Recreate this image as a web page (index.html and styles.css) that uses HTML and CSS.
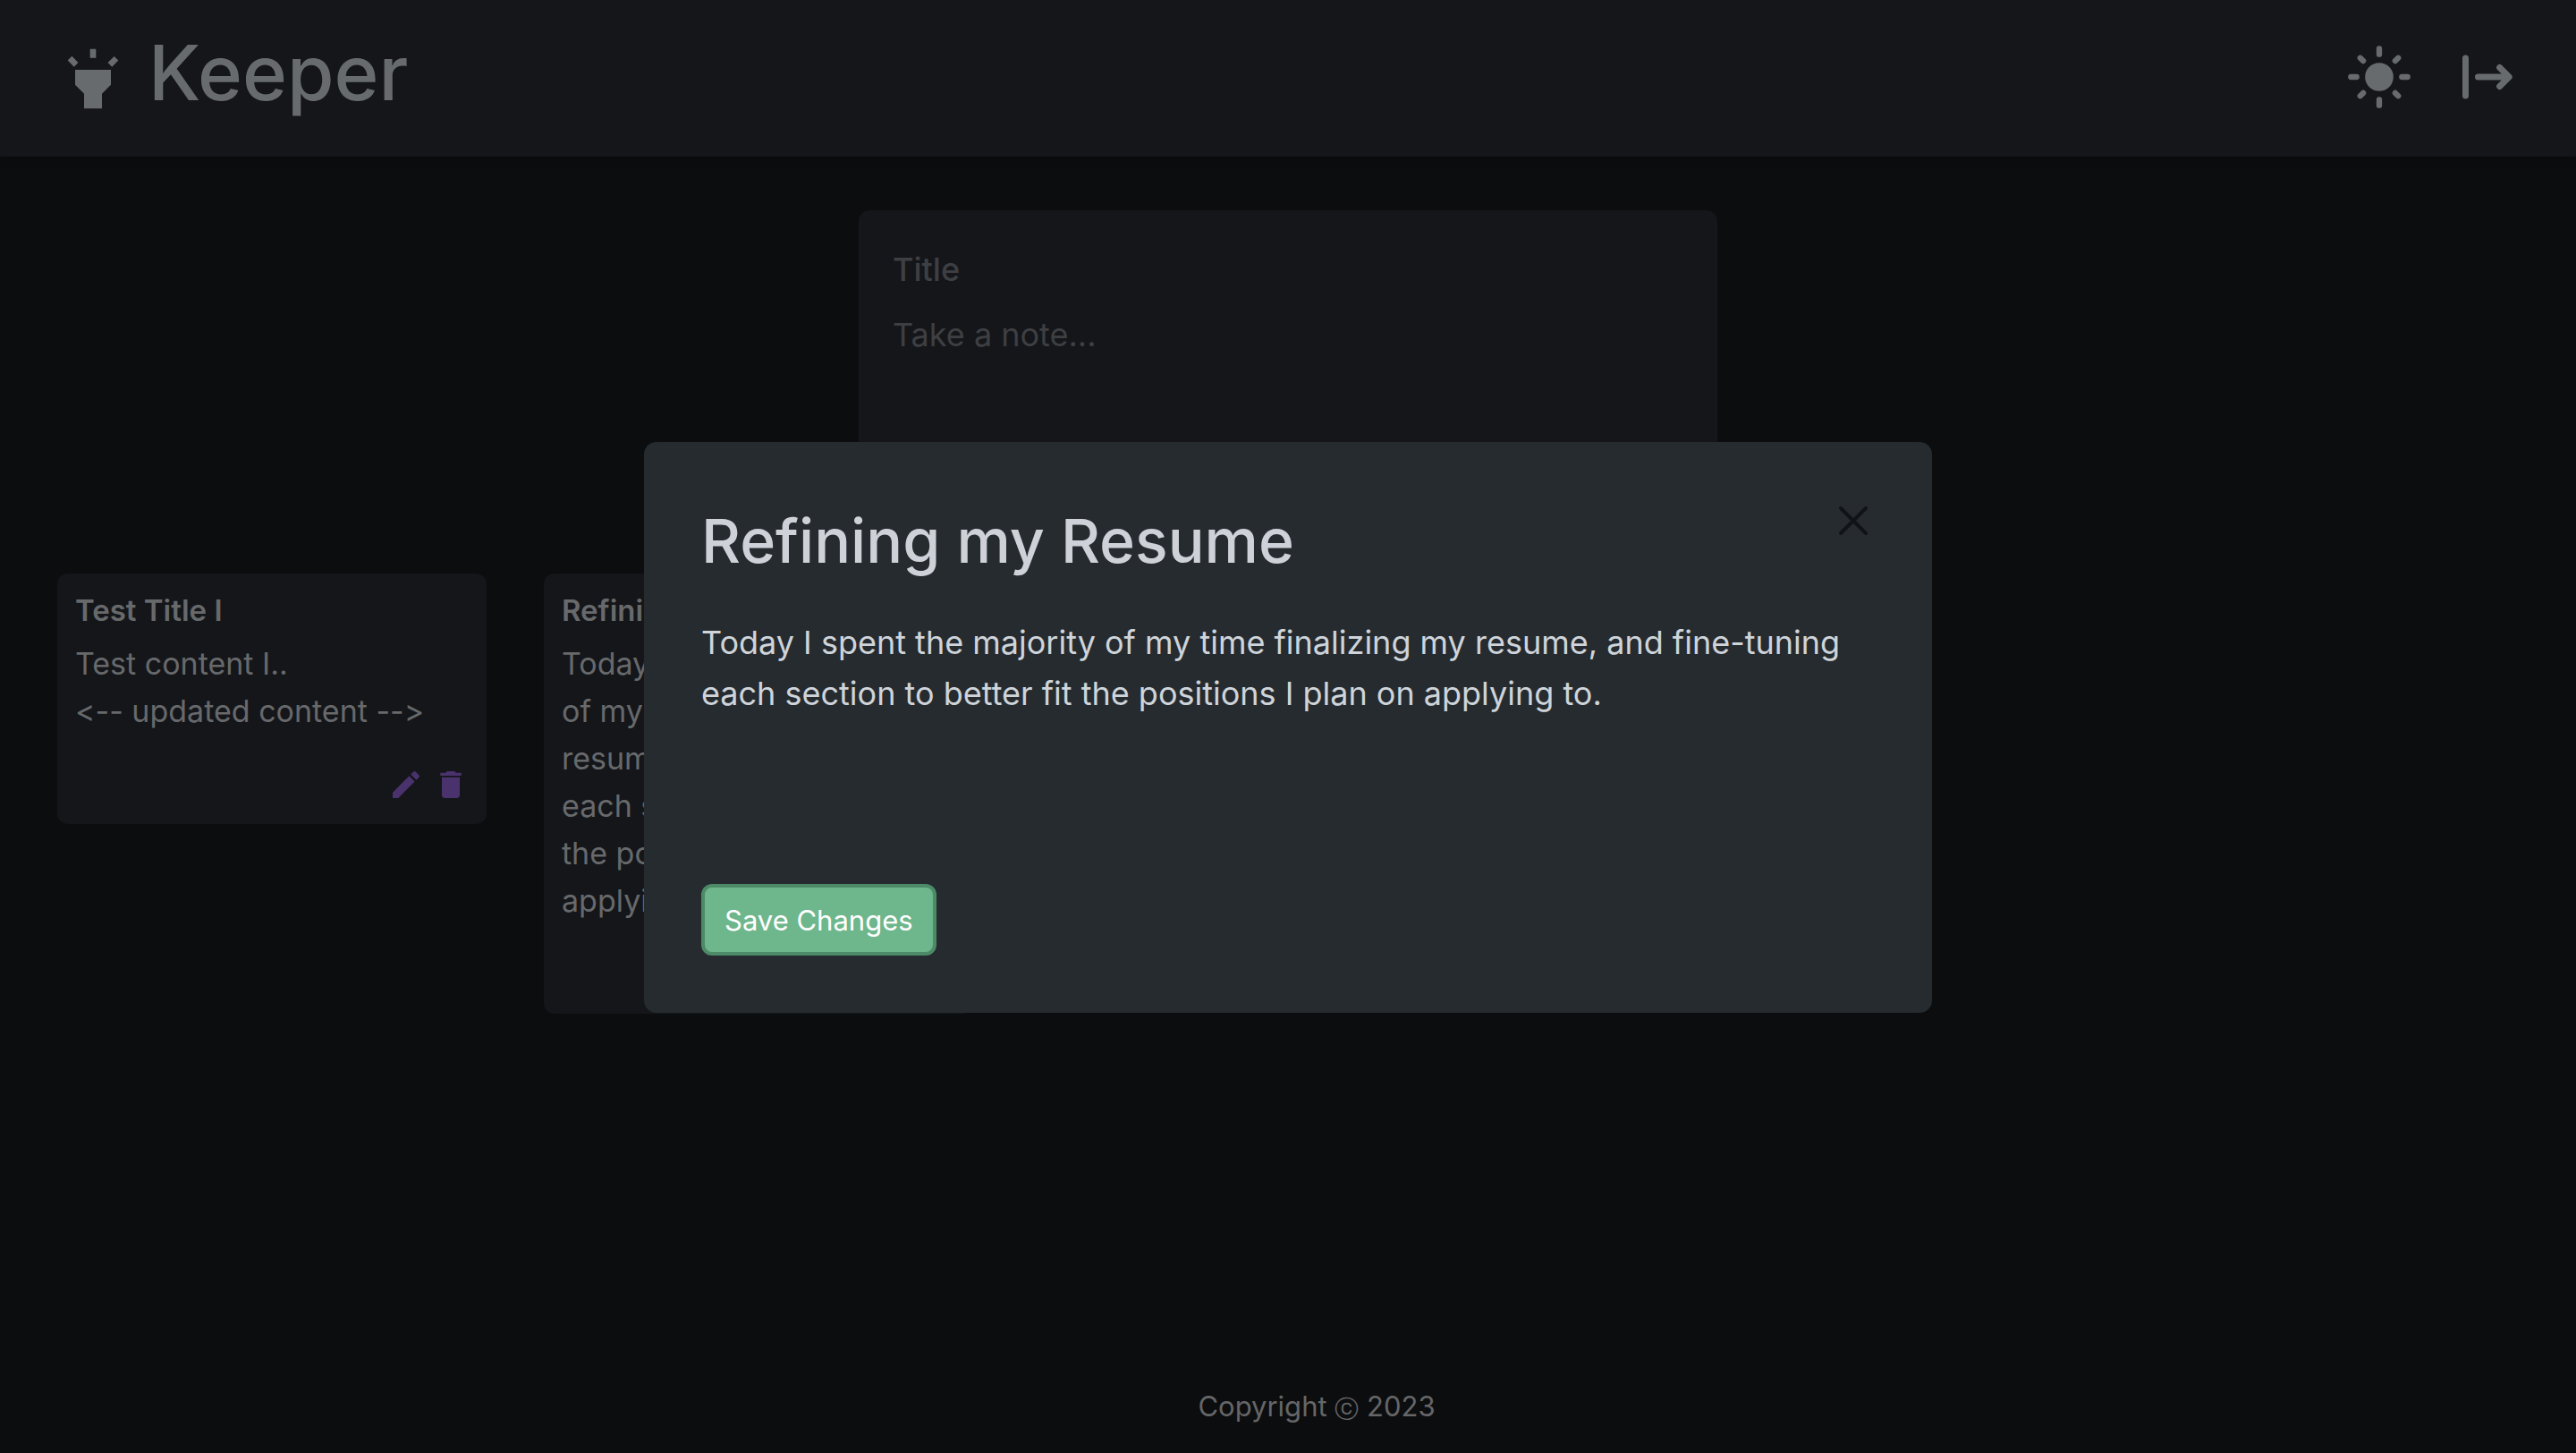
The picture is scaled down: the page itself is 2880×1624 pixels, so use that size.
FILE: index.html
```html
<!DOCTYPE html>
<html lang="en">
<head>
<meta charset="utf-8">
<meta name="viewport" content="width=device-width, initial-scale=1">
<title>Keeper</title>
<link rel="stylesheet" href="styles.css">
</head>
<body>
<div class="page">
  <header class="header">
    <a class="brand" href="#">
      <svg class="brand-icon" viewBox="0 0 24 24" aria-hidden="true"><path d="m6 14 3 3v5h6v-5l3-3V9H6zm5-12h2v3h-2zM3.5 5.875 4.914 4.46l2.12 2.122L5.62 7.997zm13.46.71 2.123-2.12 1.414 1.414L18.375 8z"/></svg>
      <h1 class="brand-name">Keeper</h1>
    </a>
    <nav class="actions">
      <button class="icon-button" type="button" aria-label="Toggle light mode">
        <svg class="icon-sun" viewBox="0 0 24 24"><circle cx="12" cy="12" r="5"/><path class="rays" d="M2 12h2M20 12h2M12 2v2M12 20v2M5.3 5.3l1.05 1.05M17.65 17.65l1.05 1.05M18.7 5.3l-1.05 1.05M6.35 17.65L5.3 18.7"/></svg>
      </button>
      <button class="icon-button" type="button" aria-label="Log out">
        <svg class="icon-logout" viewBox="0 0 24 24"><path class="rays" d="M3 6v12M7 12h9.500M13.900 9l3 3-3 3"/></svg>
      </button>
    </nav>
  </header>

  <main class="main">
    <form class="composer">
      <input class="composer-title" type="text" placeholder="Title" aria-label="Title">
      <textarea class="composer-text" rows="3" placeholder="Take a note..." aria-label="Note"></textarea>
    </form>
    <section class="notes">
      <article class="note">
        <h2 class="note-title">Test Title I</h2>
        <p class="note-text">Test content I..<br>&lt;-- updated content --&gt;</p>
        <div class="note-actions">
          <button class="icon-button" type="button" aria-label="Edit note"><svg class="icon-note" viewBox="0 0 24 24"><path d="M3 17.250V21h3.750L17.810 9.940l-3.750-3.750L3 17.250zM20.710 7.040c.39-.39.39-1.020 0-1.410l-2.340-2.340a1 1 0 0 0-1.410 0l-1.830 1.830 3.750 3.750 1.830-1.830z"/></svg></button>
          <button class="icon-button" type="button" aria-label="Delete note"><svg class="icon-note" viewBox="0 0 24 24"><path d="M6 19c0 1.100.9 2 2 2h8c1.100 0 2-.9 2-2V7H6v12zM19 4h-3.500l-1-1h-5l-1 1H5v2h14V4z"/></svg></button>
        </div>
      </article>
      <article class="note">
        <h2 class="note-title">Refining my Resume</h2>
        <p class="note-text">Today I spent the majority of my time finalizing my resume, and fine-tuning each section to better fit the positions I plan on applying to.</p>
        <div class="note-actions">
          <button class="icon-button" type="button" aria-label="Edit note"><svg class="icon-note" viewBox="0 0 24 24"><path d="M3 17.250V21h3.750L17.810 9.940l-3.750-3.750L3 17.250zM20.710 7.040c.39-.39.39-1.020 0-1.410l-2.340-2.340a1 1 0 0 0-1.410 0l-1.830 1.830 3.750 3.750 1.830-1.830z"/></svg></button>
        </div>
      </article>
    </section>
  </main>

  <footer class="footer">Copyright <span class="mark">ⓒ</span> 2023</footer>
</div>

<div class="overlay">
  <div class="modal" role="dialog" aria-modal="true" aria-labelledby="modal-title">
    <div class="modal-head">
      <h2 class="modal-title" id="modal-title">Refining my Resume</h2>
      <button class="icon-button" type="button" aria-label="Close"><svg class="icon-close" viewBox="0 0 32 32"><path d="M2 2l28 28M30 2L2 30"/></svg></button>
    </div>
    <p class="modal-text">Today I spent the majority of my time finalizing my resume, and fine-tuning each section to better fit the positions I plan on applying to.</p>
    <button class="save" type="button">Save Changes</button>
  </div>
</div>
</body>
</html>
```
FILE: styles.css
```css
* { box-sizing: border-box; }

body {
  margin: 0;
  background: #0c0d0f;
  color: #67696b;
  font-family: Inter, "Liberation Sans", sans-serif;
  font-feature-settings: "calt" 0;
}

h1, h2, p { margin: 0; }

.page {
  min-height: 100vh;
  display: flex;
  flex-direction: column;
}

.header {
  display: flex;
  align-items: center;
  justify-content: space-between;
  height: 175px;
  padding: 0 50px 0 64px;
  background: #14161a;
  box-shadow: 0 2px 10px rgba(0, 0, 0, 0.3);
}

.brand {
  display: flex;
  align-items: center;
  gap: 22px;
  color: #686b6e;
  text-decoration: none;
}

.brand-icon { width: 80px; height: 80px; fill: currentColor; }

.brand-name {
  font-size: 85px;
  font-weight: 500;
  line-height: 96px;
  padding-bottom: 12px;
}

.actions { display: flex; align-items: center; gap: 48px; padding-bottom: 4px; }

.icon-button {
  display: flex;
  padding: 0;
  border: 0;
  background: none;
  color: #686b6e;
}

.icon-button svg { display: block; fill: currentColor; }
.icon-sun { width: 76px; height: 76px; }
.icon-logout { width: 84px; height: 84px; }
.icon-button .rays {
  fill: none;
  stroke: currentColor;
  stroke-width: 2;
  stroke-linecap: round;
  stroke-linejoin: round;
}

.main { flex: 1; padding: 60px 64px; }

.composer {
  display: flex;
  flex-direction: column;
  gap: 16px;
  width: 960px;
  height: 280px;
  margin: 0 auto;
  padding: 38px 38px 24px;
  border-radius: 12px;
  background: #14161a;
}

.composer input,
.composer textarea {
  display: block;
  width: 100%;
  padding: 0;
  border: 0;
  outline: 0;
  background: none;
  resize: none;
  color: #67696b;
  font-family: inherit;
  font-size: 36px;
  line-height: 57px;
}

.composer .composer-title { height: 57px; font-weight: 500; }
.composer ::placeholder { color: #3e3f42; opacity: 1; }

.notes {
  display: flex;
  flex-wrap: wrap;
  align-items: flex-start;
  gap: 64px;
  margin-top: 126px;
}

.note {
  width: 480px;
  padding: 15px 20px 24px;
  border-radius: 12px;
  background: #14161a;
}

.note-title { font-size: 33px; font-weight: 600; line-height: 53px; }
.note-text { font-size: 34px; line-height: 53px; margin-top: 6px; }

.note-actions {
  display: flex;
  justify-content: flex-end;
  gap: 10px;
  padding-top: 36px;
}

.note-actions .icon-button { color: #4a326d; }
.icon-note { width: 40px; height: 40px; }

.footer {
  padding: 0 0 28px 64px;
  text-align: center;
  font-size: 31px;
  line-height: 48px;
  color: #656667;
}

.mark { font-size: 27px; line-height: 27px; vertical-align: middle; }

.overlay {
  position: fixed;
  inset: 0;
  display: flex;
  align-items: center;
  justify-content: center;
  padding-top: 2px;
}

.modal {
  width: 50%;
  padding: 64px;
  border-radius: 14px;
  background: #262b2f;
  color: #ced4da;
}

.modal-head {
  display: flex;
  align-items: flex-start;
  justify-content: space-between;
  margin-bottom: 40px;
}

.modal-title {
  font-size: 68px;
  font-weight: 500;
  line-height: 92px;
  color: #ced1d8;
}

.modal .modal-head .icon-button { padding: 8px; color: #111416; }
.icon-close { width: 32px; height: 32px; stroke: currentColor; stroke-width: 4; stroke-linecap: round; }

.modal-text { font-size: 36px; line-height: 57px; min-height: 234px; margin-bottom: 64px; }

.save {
  height: 80px;
  padding: 0 22px;
  border: 4px solid #4d8a68;
  border-radius: 12px;
  background: #6eb68c;
  color: #fff;
  font-family: inherit;
  font-size: 31px;
}
```
